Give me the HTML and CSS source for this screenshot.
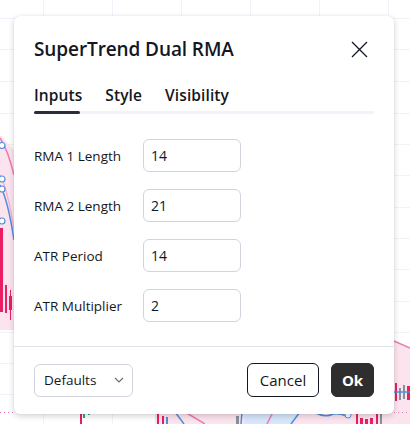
FILE: index.html
```html
<!DOCTYPE html>
<html>
<head>
<meta charset="utf-8">
<link rel="stylesheet" href="styles.css">
</head>
<body>
<svg class="chart" width="410" height="424" viewBox="0 0 410 424" xmlns="http://www.w3.org/2000/svg">
  <g stroke="#f0f3fa" stroke-width="1">
    <line x1="43.5" y1="0" x2="43.5" y2="424"/><line x1="112.5" y1="0" x2="112.5" y2="424"/>
    <line x1="181.5" y1="0" x2="181.5" y2="424"/><line x1="250.5" y1="0" x2="250.5" y2="424"/>
    <line x1="319.5" y1="0" x2="319.5" y2="424"/><line x1="388.5" y1="0" x2="388.5" y2="424"/>
    <line x1="0" y1="18.5" x2="410" y2="18.5"/><line x1="0" y1="49.5" x2="410" y2="49.5"/>
    <line x1="0" y1="81.5" x2="410" y2="81.5"/><line x1="0" y1="113.5" x2="410" y2="113.5"/>
    <line x1="0" y1="144.5" x2="410" y2="144.5"/><line x1="0" y1="175.5" x2="410" y2="175.5"/>
    <line x1="0" y1="207.5" x2="410" y2="207.5"/><line x1="0" y1="238.5" x2="410" y2="238.5"/>
    <line x1="0" y1="269.5" x2="410" y2="269.5"/><line x1="0" y1="301.5" x2="410" y2="301.5"/>
    <line x1="0" y1="332.5" x2="410" y2="332.5"/><line x1="0" y1="363.5" x2="410" y2="363.5"/>
    <line x1="0" y1="394.5" x2="410" y2="394.5"/>
  </g>
  <!-- left side -->
  <path d="M0 135 L14 150 L14 330 L0 330 Z" fill="#fce4ef"/>
  <path d="M0 138 Q8 150 14 175" stroke="#e97fb1" stroke-width="1.5" fill="none"/>
  <path d="M0 175 Q8 190 14 230" stroke="#f2b6cf" stroke-width="1.5" fill="none"/>
  <path d="M0 185 Q8 200 14 240" stroke="#4c8fe0" stroke-width="1.5" fill="none"/>
  <rect x="0" y="228" width="3" height="84" fill="#e91e63"/>
  <rect x="5" y="285" width="2" height="28" fill="#e91e63"/>
  <rect x="9" y="296" width="3" height="14" fill="#e91e63"/>
  <line x1="10.5" y1="290" x2="10.5" y2="320" stroke="#e91e63"/>
  <g fill="#fff" stroke="#4c8fe0" stroke-width="1.2">
    <ellipse cx="2" cy="145.5" rx="3" ry="3"/><ellipse cx="2" cy="179" rx="3" ry="3"/>
    <ellipse cx="2" cy="189" rx="3" ry="3"/><ellipse cx="2" cy="221" rx="3" ry="3"/>
  </g>
  <line x1="0" y1="412.5" x2="14" y2="412.5" stroke="#e97fb1" stroke-dasharray="1 3"/>
  <!-- bottom -->
  <rect x="80" y="413" width="2" height="11" fill="#e91e63"/>
  <rect x="83" y="414" width="2" height="4" fill="#26a69a"/>
  <rect x="88" y="413" width="2" height="2" fill="#26a69a"/>
  <path d="M155 410 L260 410 L260 424 L155 424 Z" fill="#fce4ef"/>
  <rect x="157" y="412" width="2" height="12" fill="#e91e63"/>
  <rect x="162" y="416" width="2" height="8" fill="#e91e63"/>
  <rect x="166" y="417" width="2" height="7" fill="#4c8fe0"/>
  <path d="M175 412 L184 424" stroke="#4c8fe0" stroke-width="1.5"/>
  <path d="M185 412 L205 424" stroke="#e97fb1" stroke-width="1.5"/>
  <path d="M205 410 L394 410 L394 424 L205 424 Z" fill="#fce4ef"/>
  <path d="M244 412 L300 412 L292 424 L244 424 Z" fill="#d7e6fb"/>
  <rect x="236" y="416" width="3" height="8" fill="#8a8f9c"/>
  <path d="M242 412 L241 424" stroke="#4c8fe0" stroke-width="1.5"/>
  <path d="M273 412 L267 424" stroke="#e97fb1" stroke-width="1.5"/>
  <path d="M300 412 L291 424" stroke="#4c8fe0" stroke-width="1.5"/>
  <path d="M316 413 Q325 418 333 414 Q340 413 346 416" stroke="#4c8fe0" stroke-width="1.5" fill="none"/>
  <circle cx="348" cy="415" r="3" fill="#fff" stroke="#4c8fe0"/>
  <rect x="356" y="414" width="2" height="10" fill="#e91e63"/>
  <rect x="360" y="418" width="3" height="6" fill="#e91e63"/>
  <rect x="365" y="419" width="3" height="5" fill="#e91e63"/>
  <rect x="370" y="418" width="3" height="6" fill="#e91e63"/>
  <rect x="376" y="414" width="2" height="10" fill="#e91e63"/>
  <rect x="380" y="414" width="2" height="10" fill="#8a8f9c"/>
  <!-- right -->
  <path d="M394 341 L410 348 L410 424 L394 424 Z" fill="#fce4ef"/>
  <path d="M394 341 L410 348" stroke="#e97fb1" stroke-width="1.5"/>
  <rect x="395" y="383" width="2" height="18" fill="#e91e63"/>
  <rect x="399" y="388" width="2" height="12" fill="#8a8f9c"/>
  <rect x="403" y="385" width="2" height="14" fill="#8a8f9c"/>
  <rect x="407" y="386" width="3" height="14" fill="#e91e63"/>
  <line x1="394" y1="392" x2="410" y2="392" stroke="#4c8fe0" stroke-width="1.5"/>
  <line x1="394" y1="412.5" x2="410" y2="412.5" stroke="#e97fb1" stroke-dasharray="1 3"/>
</svg>

<div class="dialog">
  <div class="header">
    <h1 class="title">SuperTrend Dual RMA</h1>
    <button class="close" aria-label="Close">
      <svg width="17" height="17" viewBox="0 0 17 17"><path d="M1 1 L16 16 M16 1 L1 16" stroke="#131722" stroke-width="1.3" fill="none"/></svg>
    </button>
  </div>
  <div class="tabs">
    <div class="tab-list">
      <span class="tab active">Inputs</span>
      <span class="tab">Style</span>
      <span class="tab">Visibility</span>
    </div>
    <div class="track"><div class="track-active"></div></div>
  </div>
  <div class="body">
    <div class="row"><label class="label">RMA 1 Length</label><div class="input">14</div></div>
    <div class="row"><label class="label">RMA 2 Length</label><div class="input">21</div></div>
    <div class="row"><label class="label">ATR Period</label><div class="input">14</div></div>
    <div class="row"><label class="label">ATR Multiplier</label><div class="input">2</div></div>
  </div>
  <div class="footer">
    <div class="select">Defaults
      <svg width="10" height="6" viewBox="0 0 10 6"><path d="M1 1 L5 5 L9 1" stroke="#6a6d78" stroke-width="1.2" fill="none"/></svg>
    </div>
    <div class="actions">
      <button class="btn btn-cancel">Cancel</button>
      <button class="btn btn-ok">Ok</button>
    </div>
  </div>
</div>
</body>
</html>
```

FILE: styles.css
```css
* { box-sizing: border-box; }
html, body { margin: 0; padding: 0; }
body {
  width: 410px;
  height: 424px;
  overflow: hidden;
  background: #ffffff;
  font-family: "Open Sans", "Noto Sans", sans-serif;
  color: #131722;
  position: relative;
  padding: 16px 0 0 14px;
}
.chart { position: absolute; left: 0; top: 0; }
.dialog {
  position: relative;
  width: 380px;
  height: 398px;
  background: #fff;
  border-radius: 6px;
  box-shadow: 0 2px 6px rgba(0,0,0,0.18), 0 0 1px rgba(0,0,0,0.12);
  display: flex;
  flex-direction: column;
}
.header {
  display: flex;
  justify-content: space-between;
  align-items: flex-start;
  padding: 19px 18px 0 20px;
  height: 66px;
}
.title {
  margin: 0;
  font-size: 19px;
  line-height: 28px;
  font-weight: 600;
  letter-spacing: -0.1px;
}
.close {
  border: 0;
  background: none;
  padding: 0;
  margin-top: 6px;
  margin-right: 8px;
  width: 17px;
  height: 17px;
  display: flex;
}
.tabs { padding: 3px 20px 0 20px; }
.tab-list { display: flex; gap: 23px; height: 26px; }
.tab {
  font-size: 15.5px;
  font-weight: 600;
  line-height: 20px;
  letter-spacing: 0.1px;
}
.track {
  height: 3px;
  background: #f0f3fa;
  border-radius: 2px;
}
.track-active {
  width: 46px;
  height: 3px;
  background: #2a2e39;
  border-radius: 2px;
}
.body {
  padding: 25px 20px 24px 20px;
  display: flex;
  flex-direction: column;
  gap: 17px;
  border-bottom: 1px solid #e0e3eb;
}
.row { display: flex; align-items: center; height: 33px; }
.label { width: 109px; font-size: 13.5px; }
.input {
  width: 98px;
  height: 33px;
  border: 1px solid #d1d4dc;
  border-radius: 6px;
  padding: 0 7px;
  font-size: 14px;
  display: flex;
  align-items: center;
}
.footer {
  display: flex;
  justify-content: space-between;
  align-items: center;
  padding: 16px 20px 0 20px;
}
.select {
  width: 99px;
  height: 33px;
  border: 1px solid #d1d4dc;
  border-radius: 6px;
  padding: 0 8px 0 9px;
  font-size: 13.5px;
  display: flex;
  align-items: center;
  justify-content: space-between;
}
.actions { display: flex; gap: 12px; }
.btn {
  height: 34px;
  border-radius: 6px;
  font-family: inherit;
  font-size: 15px;
  padding: 0;
}
.btn-cancel {
  width: 72px;
  background: #fff;
  border: 1px solid #131722;
  color: #131722;
}
.btn-ok {
  width: 43px;
  background: #2e2e2e;
  border: 1px solid #2e2e2e;
  color: #fff;
  font-weight: 700;
}
```
